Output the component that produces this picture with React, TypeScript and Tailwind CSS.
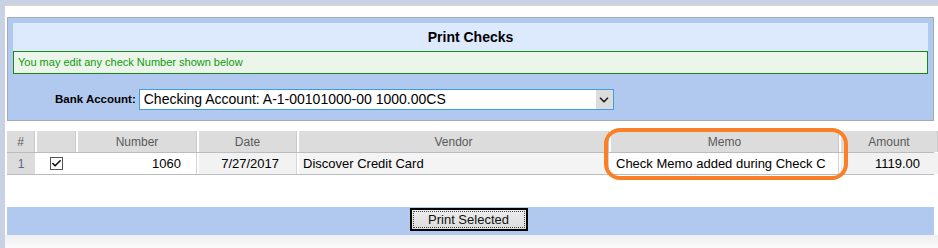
import { Check, ChevronDown } from 'lucide-react'

const font = { fontFamily: '"Liberation Sans", Arial, sans-serif' }

export default function App() {
  return (
    <div className="relative w-[938px] h-[248px] bg-white overflow-hidden" style={font}>
      {/* window chrome */}
      <div className="absolute left-0 top-0 w-[5px] h-full bg-[#c8d2e4]" />
      <div className="h-[4px] bg-[#c8d2e4]" />
      <div className="h-[2px] bg-[#d4d4d4] ml-[5px]" />

      <div className="pl-[7px] pr-[4px] pt-[11px]">
        {/* header panel */}
        <div className="h-[104px] bg-[#b1c9ee] border border-[#a3aab3] px-[5px] pt-[5px]">
          <div className="h-[28px] bg-[#dde9fd] flex items-center justify-center text-[14px] font-bold text-black">
            Print Checks
          </div>
          <div className="h-[23px] bg-[#ecf5e9] border border-[#178a17] flex items-center pl-[4px] text-[11px] text-[#0f9a0f]">
            You may edit any check Number shown below
          </div>
          <div className="flex items-center mt-[15px] ml-[42px]">
            <span className="text-[11.5px] font-bold text-black mr-[3px]">Bank Account:</span>
            <div className="w-[475px] h-[21px] bg-white border border-[#3b9fe0] flex items-center">
              <span className="flex-1 pl-[4px] text-[14px] text-black">Checking Account: A-1-00101000-00 1000.00CS</span>
              <div className="w-[17px] h-full bg-[#dcdcdc] flex items-center justify-center">
                <ChevronDown className="w-[14px] h-[14px] text-[#222]" strokeWidth={3} />
              </div>
            </div>
          </div>
        </div>

        {/* table */}
        <div className="mt-[10px] text-[12px]">
          <div className="grid grid-cols-[28px_39px_119px_98px_310px_228px_97px] gap-x-[2px] h-[21px]">
            {['#', '', 'Number', 'Date', 'Vendor', 'Memo', 'Amount'].map((h, i) => (
              <div key={i} className="bg-[#dcdcdc] border-r border-[#c9c9c9] flex items-center justify-center text-[#5a5a5a]">
                {h}
              </div>
            ))}
          </div>
          <div className="grid grid-cols-[28px_39px_119px_98px_310px_228px_97px] gap-x-[2px] h-[23px] border-t border-b border-[#b9bcc1] text-[13px] text-black">
            <div className="bg-[#dcdcdc] flex items-center justify-center text-[12px] text-[#5a6a8a]">1</div>
            <div className="bg-white flex items-center justify-center">
              <div className="w-[13px] h-[13px] border border-[#555] bg-white flex items-center justify-center">
                <Check className="w-[11px] h-[11px] text-[#111]" strokeWidth={3.5} />
              </div>
            </div>
            <div className="bg-white flex items-center justify-end pr-[15px] border-r border-[#d6d6d6]">1060</div>
            <div className="bg-[#f2f2f2] flex items-center justify-end pr-[17px] border-r border-[#d6d6d6]">7/27/2017</div>
            <div className="bg-[#f4f4f4] flex items-center pl-[4px] border-r border-[#d6d6d6]">Discover Credit Card</div>
            <div className="bg-white flex items-center pl-[5px] border-r border-[#d6d6d6] whitespace-nowrap">
              Check Memo added during Check C
            </div>
            <div className="bg-[#f2f2f2] flex items-center justify-end pr-[18px]">1119.00</div>
          </div>
        </div>

        {/* footer bar */}
        <div className="mt-[32px] h-[28px] bg-[#b1c9ee] flex justify-center items-start pt-[1px] pr-[4px]">
          <button className="w-[118px] h-[23px] border-2 border-black bg-gradient-to-b from-[#ededed] to-[#dcdcdc] p-[1px]">
            <div className="w-full h-full border border-dotted border-[#444] flex items-center justify-center text-[13px] text-[#111]">
              Print Selected
            </div>
          </button>
        </div>
      </div>
      <div className="ml-[5px] h-[14px] bg-gradient-to-b from-[#efefef] to-[#fbfbfb]" />

      {/* orange highlight annotation */}
      <div className="absolute left-[604px] top-[128px] w-[244px] h-[52px] border-[4px] border-[#f98026] rounded-[16px]" />
    </div>
  )
}
